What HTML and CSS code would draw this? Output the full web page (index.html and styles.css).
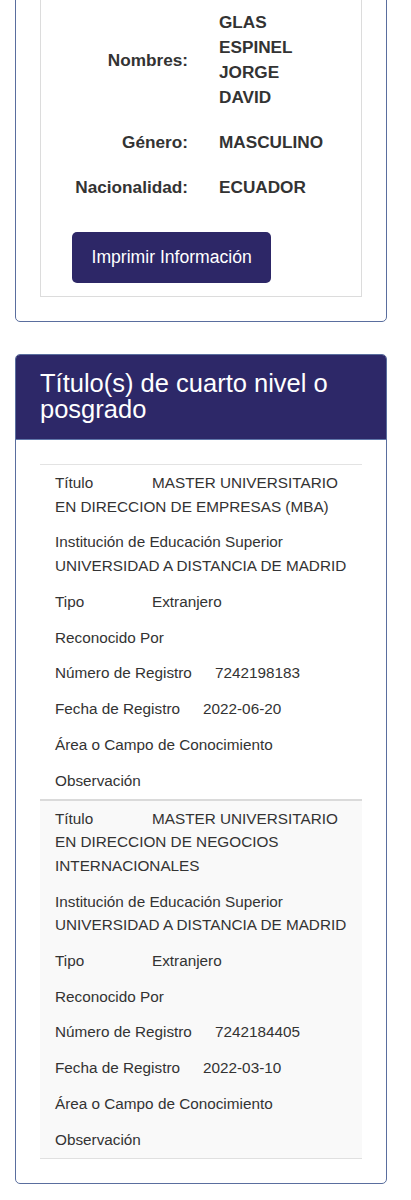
FILE: index.html
```html
<!DOCTYPE html>
<html lang="es">
<head>
<meta charset="UTF-8">
<meta name="viewport" content="width=device-width, initial-scale=1.0"/>
<title>Consulta de títulos</title>
<link rel="stylesheet" href="styles.css">
</head>
<body>
<div class="container">

  <!-- ---------- DATOS PERSONALES ---------- -->
  <div class="panel panel-first">
    <div class="panel-body">
      <div class="well">
        <div class="info-grid">
          <div class="info-label">Nombres:</div>
          <div class="info-value">GLAS ESPINEL JORGE DAVID</div>
          <div class="info-label">Género:</div>
          <div class="info-value">MASCULINO</div>
          <div class="info-label">Nacionalidad:</div>
          <div class="info-value">ECUADOR</div>
        </div>
        <button class="btn-print" type="button">Imprimir Información</button>
      </div>
    </div>
  </div>

  <!-- ---------- CUARTO NIVEL ---------- -->
  <div class="panel">
    <div class="panel-heading"><h3>Título(s) de cuarto nivel o posgrado</h3></div>
    <div class="panel-body">
      <div class="titles">
        <div class="title-entry">
          <div class="field"><span class="field-label">Título</span><span>MASTER UNIVERSITARIO</span> <span>EN DIRECCION DE EMPRESAS (MBA)</span></div>
          <div class="field"><span class="field-label">Institución de Educación Superior</span><span>UNIVERSIDAD A DISTANCIA DE MADRID</span></div>
          <div class="field"><span class="field-label">Tipo</span>Extranjero</div>
          <div class="field"><span class="field-label">Reconocido Por</span></div>
          <div class="field"><span class="field-label">Número de Registro</span>7242198183</div>
          <div class="field"><span class="field-label">Fecha de Registro</span>2022-06-20</div>
          <div class="field"><span class="field-label">Área o Campo de Conocimiento</span></div>
          <div class="field"><span class="field-label">Observación</span></div>
        </div>
        <div class="title-entry">
          <div class="field"><span class="field-label">Título</span><span>MASTER UNIVERSITARIO</span> <span>EN DIRECCION DE NEGOCIOS INTERNACIONALES</span></div>
          <div class="field"><span class="field-label">Institución de Educación Superior</span><span>UNIVERSIDAD A DISTANCIA DE MADRID</span></div>
          <div class="field"><span class="field-label">Tipo</span>Extranjero</div>
          <div class="field"><span class="field-label">Reconocido Por</span></div>
          <div class="field"><span class="field-label">Número de Registro</span>7242184405</div>
          <div class="field"><span class="field-label">Fecha de Registro</span>2022-03-10</div>
          <div class="field"><span class="field-label">Área o Campo de Conocimiento</span></div>
          <div class="field"><span class="field-label">Observación</span></div>
        </div>
      </div>
    </div>
  </div>

</div>
</body>
</html>
```

FILE: styles.css
```css
/* ---------- GLOBAL ---------- */
html,body{margin:0;padding:0;background:#fff;color:#333;font-family:"Liberation Sans",Arial,Helvetica,sans-serif;-webkit-font-smoothing:antialiased;}

/* page is scrolled: top of the first panel sits above the viewport */
.container{padding:0 24px 0 15px;margin-top:-26px;}

/* ---------- PANELS ---------- */
.panel{border:1px solid #5a6e9e;border-radius:5px;margin-bottom:32px;overflow:hidden;background:#fff;}
.panel-heading{background:#2d2868;color:#fff;padding:15px 24px 17px;border-bottom:1px solid #6077aa;}
.panel-heading h3{margin:0;font-size:25.5px;font-weight:normal;line-height:26px;}
.panel-body{padding:24px;}

/* ---------- DATOS PERSONALES ---------- */
.well{border:1px solid #dcdcdc;padding:0 0 13px;}
.info-grid{display:grid;grid-template-columns:147px 112px;column-gap:31px;align-items:center;font-size:17.2px;font-weight:bold;line-height:25px;}
.info-label{text-align:right;padding:10px 0;}
.info-value{padding:10px 0;}
.btn-print{display:block;margin:22px 0 0 31px;height:51px;padding:0 19.5px;border:0;border-radius:5px;background:#2d2767;color:#fff;font:17.6px/51px "Liberation Sans",Arial,sans-serif;cursor:pointer;}

/* ---------- TITULOS ---------- */
.titles{border-bottom:1px solid #e0e0e0;}
.title-entry{border-top:1px solid #e3e3e3;}
.title-entry + .title-entry{border-top:2px solid #dadada;background:#f9f9f9;}
.field{padding:6.3px 4px 6.3px 15px;font-size:15.3px;line-height:23.3px;}
.field-label{display:inline-block;min-width:74px;margin-right:23px;}
```
